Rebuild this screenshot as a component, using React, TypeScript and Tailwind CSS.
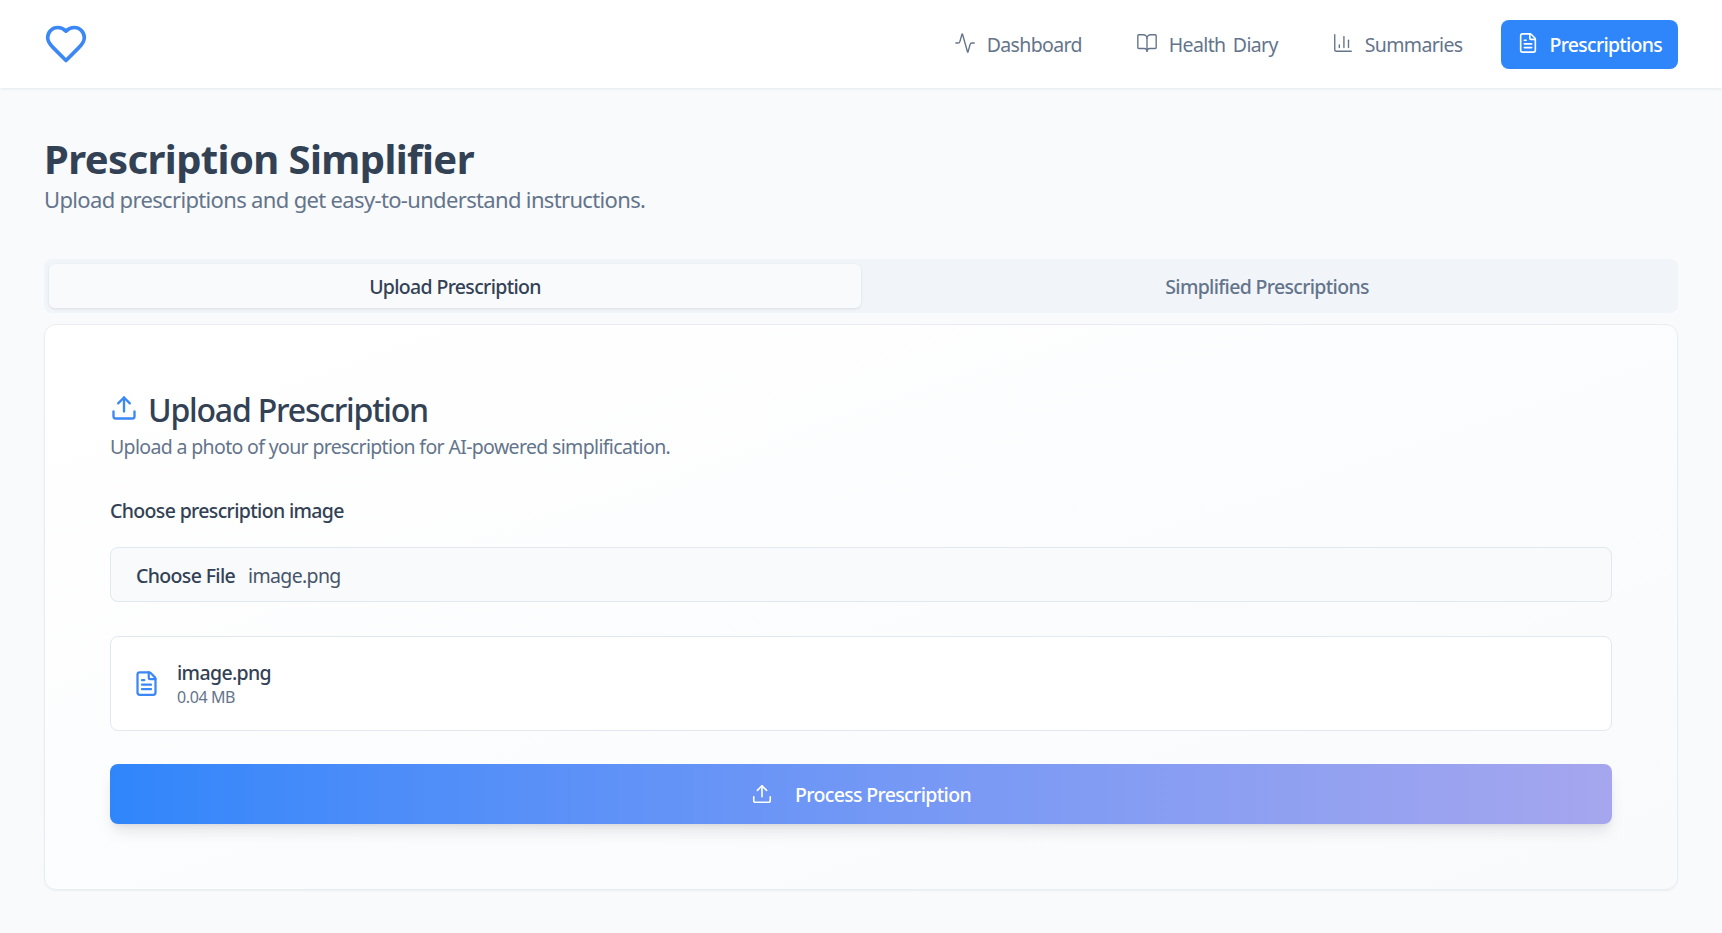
import { Activity, BookOpen, ChartColumn, FileText, Upload } from 'lucide-react';

const navItems = [
  { label: 'Dashboard', icon: Activity },
  { label: 'Health Diary', icon: BookOpen },
  { label: 'Summaries', icon: ChartColumn },
];

export default function App() {
  return (
    <div className="min-h-[933px] bg-[#f8fafc] font-['Noto_Sans',sans-serif] text-[#334155]">
      {/* Top bar */}
      <header className="h-[88px] bg-white shadow-[0_1px_3px_rgba(15,23,42,0.08)] px-11 flex items-center justify-between">
        <svg viewBox="0 0 24 24" fill="none" stroke="currentColor" strokeWidth={2} strokeLinecap="round" strokeLinejoin="round" className="w-[44px] h-[44px] text-[#3b87f5]">
          <path d="M19 14c1.49-1.46 3-3.21 3-5.5A5.5 5.5 0 0 0 16.5 3c-1.76 0-3 .5-4.5 2-1.5-1.5-2.74-2-4.5-2A5.5 5.5 0 0 0 2 8.5c0 2.3 1.5 4.05 3 5.5l7 7Z" />
        </svg>
        <nav className="flex items-center gap-[22px]">
          {navItems.map(({ label, icon: Icon }) => (
            <a key={label} className="h-[49px] px-[16px] pt-[2px] flex items-center gap-[11px] text-[19.5px] tracking-[-0.65px] [word-spacing:3px] text-[#64748b]">
              <Icon className="w-[22px] h-[22px] -mt-[4px]" strokeWidth={1.5} />
              {label}
            </a>
          ))}
          <a className="h-[49px] px-[16px] pt-[2px] flex items-center gap-[11px] text-[19.5px] tracking-[-0.73px] font-medium text-white bg-[#2f86fb] rounded-lg">
            <FileText className="w-[22px] h-[22px] -mt-[4px]" strokeWidth={1.75} />
            Prescriptions
          </a>
        </nav>
      </header>

      <main className="px-11 pt-[48px]">
        <h1 className="text-[40px] leading-[45px] font-bold tracking-[-0.6px] text-[#334155]">Prescription Simplifier</h1>
        <p className="mt-[3px] text-[22px] leading-[30px] tracking-[-0.66px] text-[#64748b]">Upload prescriptions and get easy-to-understand instructions.</p>

        {/* Tabs */}
        <div className="mt-[45px] h-[54px] rounded-lg bg-[#f1f5f9] p-[5px] grid grid-cols-2">
          <button className="pt-[2px] rounded-md bg-[#f8fafc] shadow-[0_1px_3px_rgba(15,23,42,0.1)] text-[19.5px] font-medium tracking-[-0.67px] text-[#334155]">Upload Prescription</button>
          <button className="pt-[2px] rounded-md text-[19.5px] font-medium tracking-[-0.67px] text-[#64748b]">Simplified Prescriptions</button>
        </div>

        {/* Upload card */}
        <section className="mt-[11px] h-[566px] rounded-xl border border-[#e8edf3] bg-gradient-to-br from-white to-[#f8fafc] shadow-[0_1px_2px_rgba(15,23,42,0.05)] px-[65px] pt-[64px]">
          <div className="flex items-center gap-[10px]">
            <Upload className="w-[28px] h-[28px] text-[#3b87f5] -mt-[4px]" strokeWidth={2} />
            <h2 className="text-[32px] leading-[42px] font-medium tracking-[-1.2px] text-[#334155]">Upload Prescription</h2>
          </div>
          <p className="mt-[3px] text-[19.5px] leading-[26px] tracking-[-0.65px] text-[#64748b]">Upload a photo of your prescription for AI-powered simplification.</p>

          <label className="block mt-[38px] text-[19.5px] leading-[26px] font-medium tracking-[-0.65px] text-[#334155]">Choose prescription image</label>
          <div className="mt-[23px] h-[55px] pt-[2px] rounded-lg border border-[#e2e8f0] bg-[#f8fafc] flex items-center px-[25px] text-[19.5px] tracking-[-0.65px]">
            <span className="font-medium text-[#334155]">Choose File</span>
            <span className="ml-[13px] text-[#475569]">image.png</span>
          </div>

          <div className="mt-[34px] h-[95px] pt-[2px] rounded-lg border border-[#e2e8f0] bg-white flex items-center gap-[17px] px-[22px]">
            <FileText className="w-[27px] h-[27px] -mt-[2px] text-[#3b87f5]" strokeWidth={2} />
            <div>
              <p className="text-[19.5px] leading-[20px] font-medium tracking-[-0.65px] text-[#334155]">image.png</p>
              <p className="mt-[4px] text-[16px] leading-[20px] tracking-[-0.4px] text-[#64748b]">0.04 MB</p>
            </div>
          </div>

          <button className="mt-[33px] pt-[2px] w-full h-[60px] rounded-lg bg-gradient-to-r from-[#2f86fb] to-[#a5a6ee] shadow-[0_10px_15px_-3px_rgba(15,23,42,0.1),0_4px_6px_-4px_rgba(15,23,42,0.1)] flex items-center justify-center gap-[22px] text-[19.5px] font-medium tracking-[-0.65px] text-white">
            <Upload className="w-[22px] h-[22px] -mt-[2px]" strokeWidth={1.75} />
            Process Prescription
          </button>
        </section>
      </main>
    </div>
  );
}
